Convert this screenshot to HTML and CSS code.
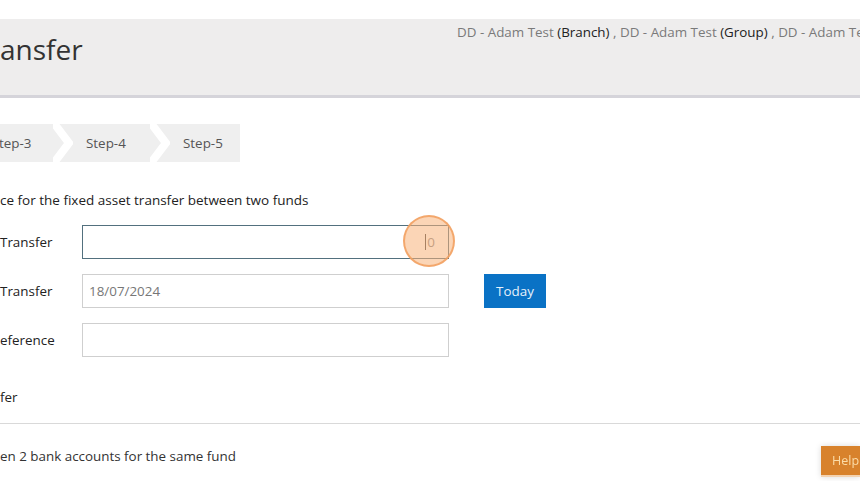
FILE: index.html
```html
<!DOCTYPE html>
<html>
<head>
<meta charset="utf-8">
<link rel="stylesheet" href="styles.css">
</head>
<body>
<div class="top-gap"></div>
<header class="header">
  <h1 class="title">ansfer</h1>
  <div class="user">DD - Adam Test <span class="dark">(Branch)</span> , DD - Adam Test <span class="dark">(Group)</span> , DD - Adam Test</div>
</header>
<main class="main">
  <nav class="steps">
    <span class="step s1">tep-3</span>
    <svg class="sep" viewBox="0 0 20 38" width="20" height="38"><polyline points="0,-2 16,19 0,40" fill="none" stroke="#fff" stroke-width="8"/></svg>
    <span class="step s2">Step-4</span>
    <svg class="sep" viewBox="0 0 20 38" width="20" height="38"><polyline points="0,-2 16,19 0,40" fill="none" stroke="#fff" stroke-width="8"/></svg>
    <span class="step s3">Step-5</span>
  </nav>
  <p class="desc">ce for the fixed asset transfer between two funds</p>
  <div class="form">
    <div class="row">
      <label class="label">Transfer</label>
      <div class="field focused"><span class="caret"></span><span class="val">0</span><span class="ring"></span></div>
    </div>
    <div class="row">
      <label class="label">Transfer</label>
      <div class="field"><span class="date">18/07/2024</span></div>
      <button class="today">Today</button>
    </div>
    <div class="row">
      <label class="label">eference</label>
      <div class="field"></div>
    </div>
  </div>
  <p class="section">fer</p>
  <hr class="rule">
  <p class="note">en 2 bank accounts for the same fund</p>
</main>
<div class="help">Help</div>
</body>
</html>
```
FILE: styles.css
```css
html, body {
  margin: 0;
  padding: 0;
  overflow: hidden;
  background: #fff;
  font-family: "Open Sans", "Noto Sans", sans-serif;
  font-size: 13.4px;
  color: #222;
}
.top-gap { height: 19px; }
.header {
  height: 76px;
  background: #eeeded;
  border-bottom: 3px solid #d5d4da;
  display: grid;
  grid-template-columns: 457px 1fr;
  overflow: hidden;
}
.title {
  margin: 11px 0 0 0;
  font-size: 28px;
  line-height: 38px;
  font-weight: 400;
  color: #333;
}
.user {
  margin-top: 3px;
  line-height: 20px;
  white-space: nowrap;
  overflow: hidden;
  color: #7a7a7a;
}
.user .dark { color: #222; }
.main { padding: 0; }
.steps {
  margin-top: 26px;
  width: 240px;
  height: 38px;
  background: #efefef;
  display: flex;
  align-items: center;
  color: #555;
}
.step { line-height: 38px; white-space: nowrap; box-sizing: border-box; }
.s1 { width: 54px; margin-left: -1px; }
.s2 { width: 77px; padding-left: 13px; }
.s3 { width: 70px; padding-left: 13px; }
.sep { display: block; flex: none; }
.desc {
  margin: 28px 0 0 0;
  line-height: 20px;
  font-size: 13.5px;
}
.form {
  margin-top: 15px;
  display: flex;
  flex-direction: column;
  gap: 15px;
}
.row {
  display: flex;
  align-items: center;
  height: 34px;
}
.label { width: 82px; flex: none; line-height: 20px; }
.field {
  position: relative;
  width: 367px;
  height: 34px;
  box-sizing: border-box;
  border: 1px solid #cfcfcf;
  display: flex;
  align-items: center;
  padding: 0 6px;
  color: #777;
}
.field.focused {
  border-color: #52707e;
  justify-content: flex-end;
  padding-right: 13px;
}
.caret {
  width: 1px;
  height: 16px;
  background: #444;
  margin-right: 1px;
}
.val { color: #888; line-height: 20px; }
.date { color: #777; line-height: 20px; }
.ring {
  position: absolute;
  left: 320px;
  top: -11px;
  width: 48px;
  height: 48px;
  border-radius: 50%;
  border: 2px solid rgba(242, 160, 95, 0.85);
  background: rgba(248, 178, 122, 0.55);
}
.today {
  margin-left: 35px;
  width: 62px;
  height: 34px;
  border: 0;
  background: #0a72c5;
  color: #e6f1fb;
  font-family: inherit;
  font-size: 13.4px;
  padding: 0;
}
.section {
  margin: 30px 0 0 0;
  line-height: 20px;
}
.rule {
  margin: 16px 0 0 0;
  border: 0;
  border-top: 1px solid #d9d9d9;
  height: 0;
}
.note {
  margin: 22px 0 0 0;
  line-height: 20px;
  color: #333;
}
.help {
  position: fixed;
  left: 821px;
  top: 446px;
  width: 39px;
  height: 31px;
  box-sizing: border-box;
  background: #d8822c;
  color: #fbdca8;
  padding-left: 11px;
  font-size: 12.5px;
  line-height: 29px;
  white-space: nowrap;
  box-shadow: 0 0 6px rgba(0, 0, 0, 0.15);
  border-bottom: 2px solid #f3d2b0;
}
```
